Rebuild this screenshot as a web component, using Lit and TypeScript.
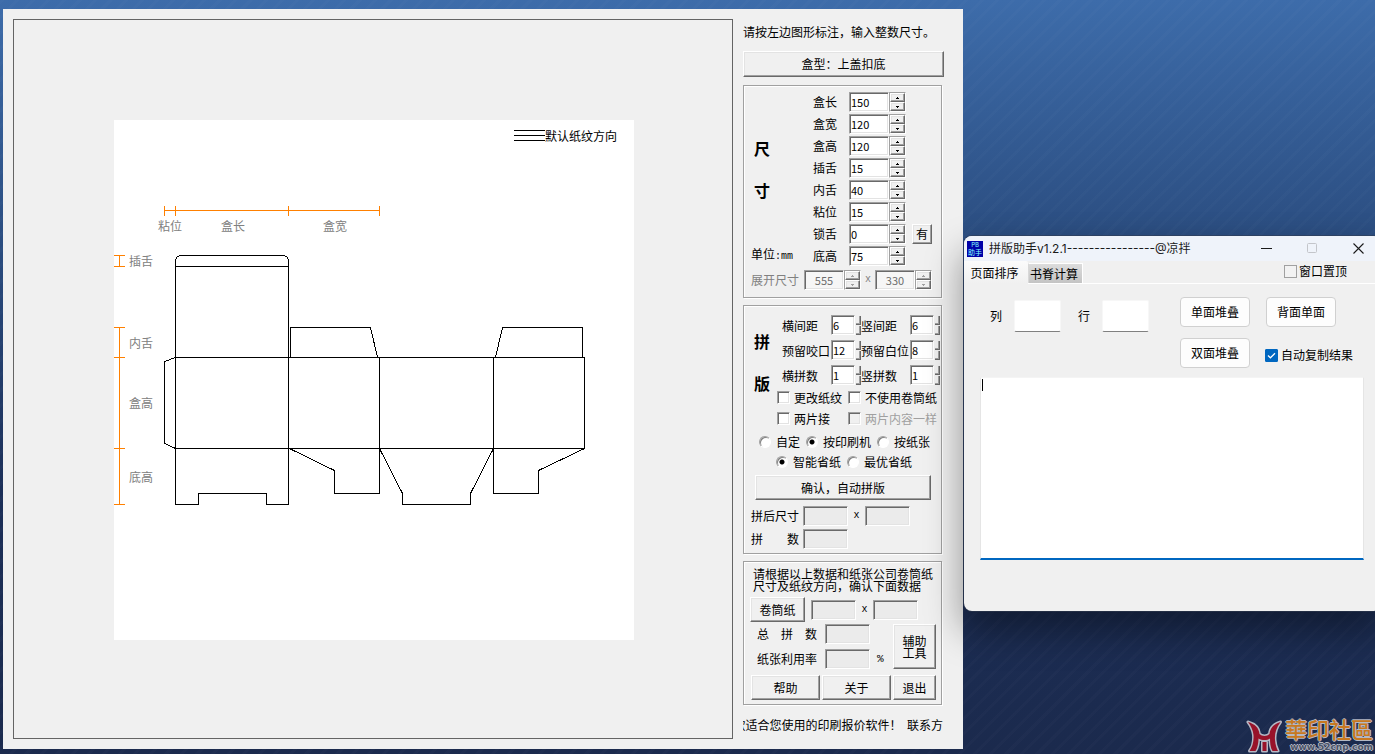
import { LitElement, html, css, svg, nothing } from "lit";
import { customElement, property } from "lit/decorators.js";

const baseText = css`
  :host {
    box-sizing: border-box;
    font-family: "Noto Sans CJK SC", "Liberation Sans", sans-serif;
    font-size: 12px;
    line-height: 20px;
    color: #000;
  }
  *, *::before, *::after { box-sizing: border-box; }
  button, input, textarea { font: inherit; color: inherit; margin: 0; padding: 0; }
`;

const classic = css`
  .raised {
    background: #f0f0f0;
    border: 1px solid;
    border-color: #fff #696969 #696969 #fff;
    border-radius: 0;
    box-shadow: inset -1px -1px 0 #a0a0a0, inset 1px 1px 0 #e3e3e3;
    text-align: center;
    white-space: nowrap;
  }
  .sunken {
    border: 1px solid;
    border-color: #a0a0a0 #fff #fff #a0a0a0;
    border-radius: 0;
    box-shadow: inset 1px 1px 0 #696969, inset -1px -1px 0 #e3e3e3;
    background: #fff;
    height: 20px;
    outline: none;
    font-size: 11px;
    line-height: 16px;
    padding: 0 1px;
  }
  .sunken:disabled { background: #ebebeb; color: #6d6d6d; }
`;

/** Numeric text box with a pair of step buttons. */
@customElement("spin-field")
class SpinField extends LitElement {
  @property() label = "";
  @property() value = "";
  @property({ type: Boolean, reflect: true }) disabled = false;
  @property({ type: Boolean, reflect: true }) narrow = false;
  static styles = [baseText, classic, css`
    :host { display: inline-flex; align-items: center; }
    .label { width: 36px; line-height: 22px; white-space: nowrap; }
    .sunken { width: 40px; }
    .steps {
      display: flex; flex-direction: column;
      width: 17px; height: 20px;
      border: 1px solid; border-color: #a0a0a0 #fff #fff #a0a0a0;
    }
    .step { flex: 1; min-height: 0; display: flex; align-items: center; justify-content: center; line-height: 0; }
    .glyph { fill: #000; }
    :host([disabled]) .sunken { text-align: center; background: #f6f6f6; }
    :host([disabled]) .glyph { fill: #a0a0a0; }
    :host([narrow]) .label { width: 49px; padding-top: 2px; }
    :host([narrow]) .sunken { width: 24px; }
    :host([narrow]) .steps { width: 6px; border-width: 0; padding-top: 1px; gap: 1px; }
    :host([narrow]) .step { border-left: 0; border-top: 0; flex: none; height: 9px; width: 5px; margin-left: 1px; box-shadow: inset -1px -1px 0 #a0a0a0; }
    :host([narrow]) .glyph { display: none; }
  `];
  render() {
    return html`
      ${this.label ? html`<label class="label" for="box">${this.label}</label>` : nothing}
      <input id="box" class="sunken" .value=${this.value} ?disabled=${this.disabled} aria-label=${this.label || "展开尺寸"}>
      <span class="steps">
        <button class="raised step" aria-label="增加" ?disabled=${this.disabled}>
          <svg class="glyph" width="3" height="2" shape-rendering="crispEdges"><path d="M1 0h1v1h1v1H0V1h1z"/></svg>
        </button>
        <button class="raised step" aria-label="减少" ?disabled=${this.disabled}>
          <svg class="glyph" width="3" height="2" shape-rendering="crispEdges"><path d="M0 0h3v1H2v1H1V1H0z"/></svg>
        </button>
      </span>`;
  }
}

/** Flat dieline of the carton with its dimension rulers. */
@customElement("box-preview")
class BoxPreview extends LitElement {
  static styles = [baseText, css`
    :host { display: flex; align-items: center; justify-content: center; border: 1px solid #646464; padding: 2px 0 0 2px; }
    .sheet { display: block; width: 520px; max-width: 100%; background: #fff; }
    .cut { fill: none; stroke: #000; }
    .ruler { fill: none; stroke: #ff8000; }
    .dim { fill: #808080; font-size: 12px; }
    .note { fill: #000; font-size: 12px; }
  `];
  private dims: [string, number, number][] = [
    ["粘位", 44, 111], ["盒长", 107, 111], ["盒宽", 209, 111],
    ["插舌", 15, 146], ["内舌", 15, 228], ["盒高", 15, 288], ["底高", 15, 362],
  ];
  render() {
    return html`<svg class="sheet" viewBox="0 0 520 520" role="img" aria-label="盒型展开图">
      <g transform="translate(.5 .5)" shape-rendering="crispEdges">
        <path class="cut" d="M399 10h31M399 15h31M399 20h31"/>
        <path class="ruler" d="M50 90H265M50 85v10M61 85v10M174 85v10M265 85v10"/>
        <path class="ruler" d="M5 135v11M-1 135h11M-1 146h11M5 207V384M-1 207h11M-1 237h11M-1 328h11M-1 384h11"/>
        <path class="cut" d="M61 237V140L62 137L65 135H170L173 137L174 140V237M61 146H174"/>
        <path class="cut" d="M61 237H470V328H61L50 323V241ZM61 237V328M174 237V328M265 237V328M379 237V328"/>
        <path class="cut" d="M176 237V207H256L263 237M381 237L388 207H468V237"/>
        <path class="cut" d="M61 328V384H84V373H152V384H174V328"/>
        <path class="cut" d="M175 328L220 350V373H265V328L288 373V384H356V373L379 328V373H424V350L470 328"/>
      </g>
      <text class="note" x="431" y="21">默认纸纹方向</text>
      ${this.dims.map(([t, x, y]) => svg`<text class="dim" x=${x} y=${y}>${t}</text>`)}
    </svg>`;
  }
}

@customElement("control-panel")
class ControlPanel extends LitElement {
  static styles = [baseText, classic, css`
    :host { display: block; width: 201px; }
    .intro { line-height: 26px; white-space: nowrap; }
    .type { display: block; width: 100%; height: 26px; margin: 6px 0 8px; }
    .group {
      width: 199px; margin-bottom: 7px; padding: 5px 0 6px 7px;
      border: 1px solid #a0a0a0;
      box-shadow: 1px 1px 0 #fff, inset 1px 1px 0 #fff;
    }
    .split { display: flex; }
    .side { display: flex; flex-direction: column; gap: 22px; width: 62px; padding-top: 47px; }
    .layout .side { width: 26px; padding-top: 19px; }
    .big { font-size: 16px; font-weight: 700; padding-left: 3px; }
    .unit { margin-top: auto; line-height: 20px; }
    .mono { font-family: "Liberation Mono", monospace; font-size: 10px; }
    .line { display: flex; align-items: center; height: 22px; }
    .have { width: 20px; height: 20px; margin-left: 6px; line-height: 16px; }
    .spread { margin-top: 2px; color: #808080; }
    .spread .name { width: 53px; }
    .x { width: 17px; text-align: center; font-family: "Liberation Mono", monospace; font-size: 10px; }
    .spread .x { width: 14px; }
    .layout { padding: 6px 0 3px 7px; }
    .pair { display: flex; height: 25px; padding-left: 5px; align-items: center; }
    .checks { display: grid; grid-template-columns: 71px auto; grid-auto-rows: 21px; align-items: center; }
    .tick { display: flex; align-items: center; gap: 4px; white-space: nowrap; }
    .off { color: #a0a0a0; }
    .check, .radio { appearance: none; flex: none; width: 13px; height: 13px; margin: 0; }
    .check { border: 1px solid; border-color: #a0a0a0 #fff #fff #a0a0a0; background: #fff; box-shadow: inset 1px 1px 0 #696969, inset -1px -1px 0 #e3e3e3; }
    .check:disabled { background: #f0f0f0; }
    .radio {
      width: 12px; height: 12px; border-radius: 50%;
      border: 1px solid; border-color: #a0a0a0 #fff #fff #a0a0a0;
      background: #fff; box-shadow: inset 1px 1px 0 #808080;
    }
    .radio:checked { background: radial-gradient(circle, #000 0 2px, #fff 3px); }
    .radios { display: flex; height: 20px; gap: 6px; padding-left: 8px; }
    .radios.first { margin-top: 3px; }
    .radios.second { padding-left: 25px; }
    .radios .tick { gap: 5px; }
    .confirm { display: block; width: 176px; height: 25px; margin: 3px 0 4px 4px; }
    .result { display: flex; align-items: center; height: 23px; }
    .result .name { display: flex; justify-content: space-between; width: 48px; margin-right: 4px; }
    .out { width: 45px; }
    .advice { margin: 0 0 5px 2px; line-height: 12px; white-space: nowrap; }
    .final { padding: 6px 0 4px 7px; }
    .roll { display: flex; align-items: center; height: 25px; }
    .rollbtn { width: 55px; height: 25px; margin: 0 6px 0 -1px; }
    .totals { display: flex; justify-content: space-between; margin: 2px 5px 6px 6px; }
    .rows { display: grid; gap: 5px; }
    .total { display: flex; align-items: center; height: 20px; }
    .total .name { display: flex; justify-content: space-between; width: 60px; margin-right: 8px; }
    .pct { padding-left: 7px; font-family: "Liberation Mono", monospace; font-size: 11px; }
    .helper { width: 43px; height: 45px; line-height: 12px; }
    .actions { display: grid; grid-template-columns: 69px 69px 43px; gap: 2px; margin-right: 5px; }
    .action { height: 25px; }
    .ticker { display: flex; justify-content: flex-end; overflow: hidden; width: 200px; margin-top: 10px; white-space: pre; }
  `];
  private sizes: [string, string][] = [
    ["盒长", "150"], ["盒宽", "120"], ["盒高", "120"], ["插舌", "15"],
    ["内舌", "40"], ["粘位", "15"], ["锁舌", "0"], ["底高", "75"],
  ];
  private gaps = [
    [["横间距", "6"], ["竖间距", "6"]],
    [["预留咬口", "12"], ["预留白位", "8"]],
    [["横拼数", "1"], ["竖拼数", "1"]],
  ];
  private radio(group: string, text: string, on = false) {
    return html`<label class="tick"><input class="radio" type="radio" name=${group} ?checked=${on}>${text}</label>`;
  }
  private check(text: string, off = false) {
    return html`<label class="tick ${off ? "off" : ""}"><input class="check" type="checkbox" ?disabled=${off}>${text}</label>`;
  }
  private out(name: string) {
    return html`<input class="sunken out" disabled aria-label=${name}>`;
  }
  render() {
    return html`
      <div class="intro">请按左边图形标注，输入整数尺寸。</div>
      <button class="raised type">盒型：上盖扣底</button>

      <section class="group">
        <div class="split">
          <div class="side">
            <span class="big">尺</span><span class="big">寸</span>
            <span class="unit">单位<span class="mono">:mm</span></span>
          </div>
          <div>
            ${this.sizes.map(([l, v]) => html`<div class="line">
              <spin-field label=${l} value=${v}></spin-field>
              ${l === "锁舌" ? html`<button class="raised have">有</button>` : nothing}
            </div>`)}
          </div>
        </div>
        <div class="line spread">
          <span class="name">展开尺寸</span>
          <spin-field disabled value="555"></spin-field>
          <span class="x">x</span>
          <spin-field disabled value="330"></spin-field>
        </div>
      </section>

      <section class="group layout">
        <div class="split">
          <div class="side"><span class="big">拼</span><span class="big">版</span></div>
          <div>
            ${this.gaps.map((row) => html`<div class="pair">
              ${row.map(([l, v]) => html`<spin-field narrow label=${l} value=${v}></spin-field>`)}
            </div>`)}
            <div class="checks">
              ${this.check("更改纸纹")}${this.check("不使用卷筒纸")}
              ${this.check("两片接")}${this.check("两片内容一样", true)}
            </div>
          </div>
        </div>
        <div class="radios first">
          ${this.radio("by", "自定")}${this.radio("by", "按印刷机", true)}${this.radio("by", "按纸张")}
        </div>
        <div class="radios second">
          ${this.radio("save", "智能省纸", true)}${this.radio("save", "最优省纸")}
        </div>
        <button class="raised confirm">确认，自动拼版</button>
        <div class="result"><span class="name">拼后尺寸</span>${this.out("拼后长")}<span class="x">x</span>${this.out("拼后宽")}</div>
        <div class="result"><span class="name"><span>拼</span><span>数</span></span>${this.out("拼数")}</div>
      </section>

      <section class="group final">
        <p class="advice">请根据以上数据和纸张公司卷筒纸<br>尺寸及纸纹方向，确认下面数据</p>
        <div class="roll">
          <button class="raised rollbtn">卷筒纸</button>
          ${this.out("卷筒纸长")}<span class="x">x</span>${this.out("卷筒纸宽")}
        </div>
        <div class="totals">
          <div class="rows">
            <div class="total"><span class="name"><span>总</span><span>拼</span><span>数</span></span>${this.out("总拼数")}</div>
            <div class="total"><span class="name">纸张利用率</span>${this.out("纸张利用率")}<span class="pct">%</span></div>
          </div>
          <button class="raised helper">辅助<br>工具</button>
        </div>
        <div class="actions">
          <button class="raised action">帮助</button>
          <button class="raised action">关于</button>
          <button class="raised action">退出</button>
        </div>
      </section>
      <div class="ticker">款适合您使用的印刷报价软件！  联系方</div>
    `;
  }
}

@customElement("tool-window")
class ToolWindow extends LitElement {
  static styles = [baseText, css`
    :host {
      display: block; background: #f0f0f0;
      border-radius: 8px; overflow: hidden; min-height: 375px;
      box-shadow: 0 0 0 1px rgba(50, 60, 80, .55), 0 18px 36px 2px rgba(0, 0, 0, .38);
    }
    .title { display: flex; align-items: center; height: 25px; padding-left: 3px; background: #eff3fa; }
    .logo { flex: none; margin-right: 6px; }
    .name { flex: 1; white-space: nowrap; color: #1a1a1a; font-family: Inter, "Noto Sans CJK SC", sans-serif; }
    .sys { width: 46px; height: 25px; border: 0; background: none; display: flex; align-items: center; justify-content: center; }
    .bar { display: flex; align-items: flex-end; height: 23px; border-bottom: 1px solid #fff; }
    .tab { border: 0; height: 20px; white-space: nowrap; line-height: 20px; }
    .on { width: 64px; height: 23px; background: linear-gradient(#fbfbfb, #f0f0f0); border-radius: 0 2px 0 0; margin-bottom: -1px; padding-right: 3px; }
    .idle { width: 55px; border: 1px solid #fff; border-bottom: 0; border-left-color: #d8d8d8; padding-right: 3px; background: linear-gradient(#dcdcdc, #c4c4c4); }
    .tick { display: flex; align-items: center; gap: 2px; white-space: nowrap; }
    .top { margin: 0 34px 0 auto; height: 24px; }
    .check { appearance: none; width: 13px; height: 13px; flex: none; border: 1px solid #a0a0a0; background: #f2f2f2; }
    .check:checked {
      border-color: #0067c0; border-radius: 1px;
      background: #0067c0 url("data:image/svg+xml,%3Csvg xmlns='http://www.w3.org/2000/svg' viewBox='0 0 11 11'%3E%3Cpath d='M2 5.5l2.4 2.3L9 3.3' fill='none' stroke='white' stroke-width='1.2'/%3E%3C/svg%3E");
    }
    .form { display: flex; justify-content: space-between; padding: 12px 28px 0 26px; height: 93px; }
    .counts { display: flex; gap: 17px; padding-top: 4px; }
    .count { display: flex; align-items: center; gap: 12px; height: 32px; }
    .num { width: 47px; height: 32px; border: 1px solid #f7f7f7; border-bottom: 1px solid #808080; border-radius: 2px; background: #fff; text-align: center; }
    .cmds { display: grid; grid-template-columns: 70px 87px; column-gap: 16px; row-gap: 11px; align-content: start; padding-top: 1px; }
    .cmd { width: 70px; height: 30px; border: 1px solid #d0d0d0; border-radius: 4px; background: #fdfdfd; }
    .auto { margin-left: -1px; gap: 3px; padding-top: 4px; }
    .memo {
      display: block; width: calc(100% - 33px); height: 183px; margin-left: 16px;
      resize: none; outline: none; border: 1px solid #e5e5e5; border-top-color: #f4f4f4; border-bottom: 2px solid #0067c0;
      background: linear-gradient(#000, #000) 1px 1px / 1px 12px no-repeat #fff;
    }
  `];
  render() {
    return html`
      <header class="title">
        <svg class="logo" width="16" height="16" viewBox="0 0 16 16">
          <rect width="16" height="16" fill="#0000a8"/>
          <text x="8" y="6" font-size="6" text-anchor="middle" fill="#8ff">PB</text>
          <text x="8" y="14" font-size="7" text-anchor="middle" fill="#8ff">助手</text>
        </svg>
        <span class="name">拼版助手v1.2.1----------------@凉拌</span>
        <button class="sys" aria-label="最小化"><svg width="11" height="11"><path d="M0 5.5h11" stroke="#1a1a1a"/></svg></button>
        <button class="sys" aria-label="最大化" disabled><svg width="11" height="11"><rect x=".5" y=".5" width="9" height="9" rx="1" fill="none" stroke="#c3c5ca"/></svg></button>
        <button class="sys" aria-label="关闭"><svg width="11" height="11"><path d="M.5 .5l10 10M10.500 .5l-10 10" stroke="#1a1a1a" stroke-width="1.1"/></svg></button>
      </header>
      <nav class="bar">
        <button class="tab on">页面排序</button>
        <button class="tab idle">书脊计算</button>
        <label class="tick top"><input class="check" type="checkbox">窗口置顶</label>
      </nav>
      <div class="form">
        <div class="counts">
          <label class="count">列<input class="num"></label>
          <label class="count">行<input class="num"></label>
        </div>
        <div class="cmds">
          <button class="cmd">单面堆叠</button>
          <button class="cmd">背面单面</button>
          <button class="cmd">双面堆叠</button>
          <label class="tick auto"><input class="check" type="checkbox" checked>自动复制结果</label>
        </div>
      </div>
      <textarea class="memo" aria-label="结果"></textarea>
    `;
  }
}

@customElement("site-mark")
class SiteMark extends LitElement {
  static styles = [baseText, css`
    :host { display: flex; align-items: flex-end; justify-content: flex-end; gap: 2px; padding-right: 2px; }
    .words { display: flex; flex-direction: column; align-items: flex-end; white-space: nowrap; }
    .brand, .site { text-shadow: 1px 0 #b4b8c4, -1px 0 #b4b8c4, 0 1px #b4b8c4, 0 -1px #b4b8c4; }
    .brand { font: 500 22px/24px "Noto Sans CJK TC", sans-serif; color: #c87820; }
    .site { font: 700 9px/14px "DejaVu Sans", sans-serif; color: #4c5468; }
  `];
  render() {
    return html`
      <svg width="37" height="34" viewBox="0 0 37 34">
        <g stroke="#b4b8c4" stroke-width="3" stroke-linejoin="round" fill="#98132a" paint-order="stroke">
          <path d="M2 2C9 4 13 8 13.500 14C16 16.500 21 16.500 23.500 14C24 8 28 4 34.500 2C30 8 28.500 14 29 20C29.300 25 31 29 32 31H26.500C24.500 28 24 23 24 18.500C21 20.500 16 20.500 12.500 18.500C12.500 23 11.500 28 9.500 31H3.500C6.500 27 8 21 7.500 15C7 10 5 6 2 2Z"/>
          <path d="M16.500 22H20.500V31H16.500Z"/>
        </g>
      </svg>
      <div class="words"><span class="brand">華印社區</span><span class="site">www.52cnp.com</span></div>`;
  }
}

@customElement("app-root")
class AppRoot extends LitElement {
  static styles = [baseText, css`
    :host {
      display: grid; grid-template-columns: minmax(780px, 1fr) 412px;
      min-height: 100vh; padding: 9px 0 5px 3px; overflow: hidden;
      background:
        repeating-linear-gradient(135deg, rgba(255, 255, 255, .015) 0 3px, transparent 3px 11px),
        linear-gradient(#3d6caa 0, #2b4d80 32%, #1c2f58 65%, #1b2a4d 100%);
    }
    .main { display: flex; gap: 10px; padding: 10px 19px 10px 10px; background: #f0f0f0; }
    .preview { flex: 1; min-width: 0; }
    .panel { flex: none; }
    .right { display: flex; flex-direction: column; justify-content: space-between; padding-left: 1px; position: relative; }
    .tool { width: calc(100% + 6px); margin-top: 227px; }
    .mark { margin-bottom: -5px; }
  `];
  render() {
    return html`
      <main class="main">
        <box-preview class="preview"></box-preview>
        <control-panel class="panel"></control-panel>
      </main>
      <div class="right">
        <tool-window class="tool"></tool-window>
        <site-mark class="mark"></site-mark>
      </div>`;
  }
}
